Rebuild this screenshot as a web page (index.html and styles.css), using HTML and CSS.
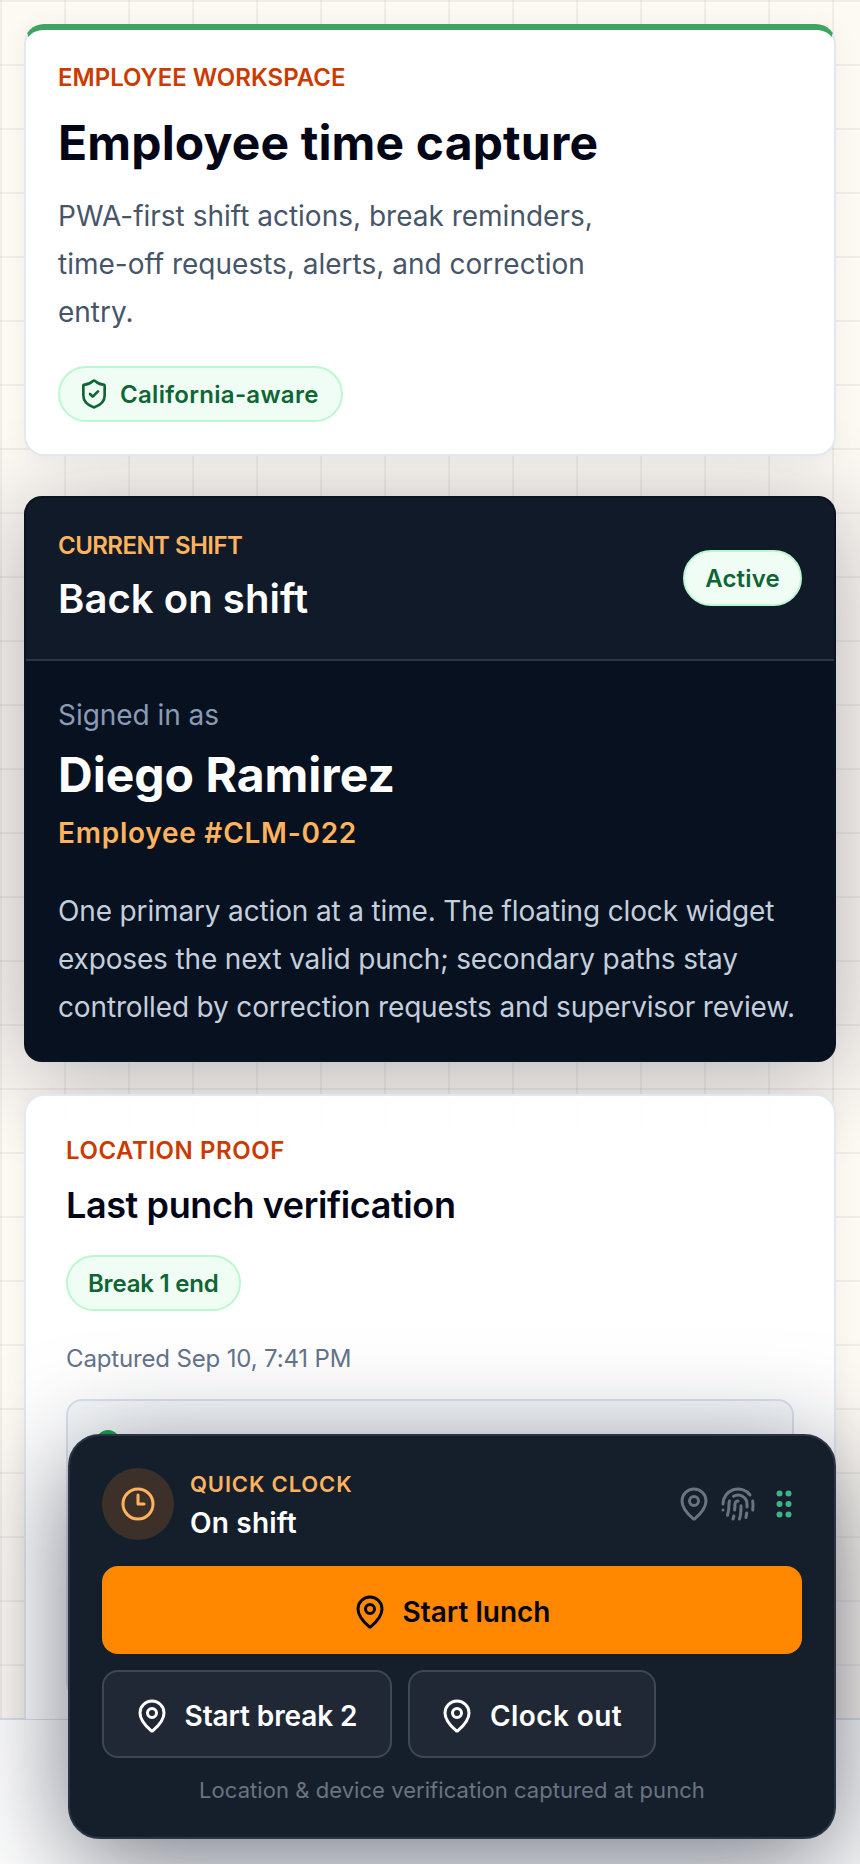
FILE: index.html
```html
<!DOCTYPE html>
<html lang="en">
<head>
<meta charset="utf-8">
<title>Employee time capture</title>
<link rel="stylesheet" href="styles.css">
</head>
<body>
<div class="app">
  <main class="main">
    <section class="card hero">
      <p class="eyebrow">EMPLOYEE WORKSPACE</p>
      <h1 class="hero-title">Employee time capture</h1>
      <p class="hero-desc">PWA-first shift actions, break reminders, time-off requests, alerts, and correction entry.</p>
      <span class="chip chip-icon">
        <svg class="ico-shield" viewBox="0 0 24 24"><path d="M20 13c0 5-3.5 7.5-7.66 8.95a1 1 0 0 1-.67-.01C7.5 20.5 4 18 4 13V6a1 1 0 0 1 1-1c2 0 4.5-1.2 6.24-2.72a1.17 1.17 0 0 1 1.52 0C14.51 3.81 17 5 19 5a1 1 0 0 1 1 1z"/><path d="m9 12 2 2 4-4"/></svg>
        California-aware
      </span>
    </section>

    <section class="shift">
      <header class="shift-head">
        <div>
          <p class="eyebrow eyebrow-amber">CURRENT SHIFT</p>
          <h2 class="shift-title">Back on shift</h2>
        </div>
        <span class="chip chip-active">Active</span>
      </header>
      <div class="shift-body">
        <p class="signed">Signed in as</p>
        <p class="name">Diego Ramirez</p>
        <p class="emp-id">Employee #CLM-022</p>
        <p class="shift-desc">One primary action at a time. The floating clock widget exposes the next valid punch; secondary paths stay controlled by correction requests and supervisor review.</p>
      </div>
    </section>

    <section class="card proof">
      <p class="eyebrow eyebrow-proof">LOCATION PROOF</p>
      <h2 class="proof-title">Last punch verification</h2>
      <span class="chip chip-break">Break 1 end</span>
      <p class="captured">Captured Sep 10, 7:41 PM</p>
      <div class="proof-box"><span class="proof-dot"></span></div>
    </section>
  </main>

  <div class="bottom-bar"></div>

  <aside class="widget">
    <div class="widget-top">
      <span class="clock-badge">
        <svg class="ico" viewBox="0 0 24 24"><circle cx="12" cy="12" r="10"/><path d="M12 6v6h4"/></svg>
      </span>
      <div class="widget-status">
        <p class="quick">QUICK CLOCK</p>
        <p class="on-shift">On shift</p>
      </div>
      <div class="widget-tools">
        <svg class="ico ico-muted" viewBox="0 0 24 24"><path d="M20 10c0 4.993-5.539 10.193-7.399 11.799a1 1 0 0 1-1.202 0C9.539 20.193 4 14.993 4 10a8 8 0 0 1 16 0"/><circle cx="12" cy="10" r="3"/></svg>
        <svg class="ico ico-muted" viewBox="0 0 24 24"><path d="M12 10a2 2 0 0 0-2 2c0 1.02-.1 2.51-.26 4"/><path d="M14 13.12c0 2.38 0 6.38-1 8.88"/><path d="M17.29 21.02c.12-.6.43-2.3.5-3.02"/><path d="M2 12a10 10 0 0 1 18-6"/><path d="M2 16h.01"/><path d="M21.8 16c.2-2 .131-5.354 0-6"/><path d="M5 19.5C5.5 18 6 15 6 12a6 6 0 0 1 .34-2"/><path d="M8.65 22c.21-.66.45-1.32.57-2"/><path d="M9 6.8a6 6 0 0 1 9 5.2v2"/></svg>
        <svg class="ico ico-grip" viewBox="0 0 24 24"><circle cx="9" cy="5" r="1"/><circle cx="15" cy="5" r="1"/><circle cx="9" cy="12" r="1"/><circle cx="15" cy="12" r="1"/><circle cx="9" cy="19" r="1"/><circle cx="15" cy="19" r="1"/></svg>
      </div>
    </div>
    <button class="btn btn-primary" type="button">
      <svg class="ico" viewBox="0 0 24 24"><path d="M20 10c0 4.993-5.539 10.193-7.399 11.799a1 1 0 0 1-1.202 0C9.539 20.193 4 14.993 4 10a8 8 0 0 1 16 0"/><circle cx="12" cy="10" r="3"/></svg>
      Start lunch
    </button>
    <div class="btn-row">
      <button class="btn btn-secondary btn-break" type="button">
        <svg class="ico" viewBox="0 0 24 24"><path d="M20 10c0 4.993-5.539 10.193-7.399 11.799a1 1 0 0 1-1.202 0C9.539 20.193 4 14.993 4 10a8 8 0 0 1 16 0"/><circle cx="12" cy="10" r="3"/></svg>
        Start break 2
      </button>
      <button class="btn btn-secondary btn-clock" type="button">
        <svg class="ico" viewBox="0 0 24 24"><path d="M20 10c0 4.993-5.539 10.193-7.399 11.799a1 1 0 0 1-1.202 0C9.539 20.193 4 14.993 4 10a8 8 0 0 1 16 0"/><circle cx="12" cy="10" r="3"/></svg>
        Clock out
      </button>
    </div>
    <p class="widget-note">Location &amp; device verification captured at punch</p>
  </aside>
</div>
</body>
</html>
```
FILE: styles.css
```css
* { box-sizing: border-box; }
html, body { margin: 0; padding: 0; }
body { font-family: Inter, "Noto Sans", sans-serif; background: #fff; color: #0f172a; }
p, h1, h2 { margin: 0; }

.app { position: relative; width: 860px; height: 1864px; overflow: hidden; display: flex; flex-direction: column; }

.main {
  height: 1719px; flex: none; overflow: hidden; padding: 24px 24px 0;
  background-color: #fdf9f3;
  background-image:
    linear-gradient(rgba(15,23,42,.05) 2px, transparent 2px),
    linear-gradient(90deg, rgba(15,23,42,.05) 2px, transparent 2px);
  background-size: 64px 64px;
}
.bottom-bar { flex: 1; background: #fff; border-top: 2px solid #dbe3ee; margin-top: -1px; position: relative; }

svg { display: block; flex: none; fill: none; stroke: currentColor; stroke-width: 2; stroke-linecap: round; stroke-linejoin: round; }
.ico { width: 36px; height: 36px; }
.ico-shield { width: 32px; height: 32px; }
.ico-muted { color: #6b7280; }
.ico-grip { color: #3fb587; }

.card {
  position: relative; z-index: 1;
  background: rgba(255,255,255,.97);
  border: 2px solid #e2e8f0;
  border-radius: 20px;
  box-shadow: 0 2px 24px rgba(15,23,42,.05);
}

.eyebrow { font-size: 24px; line-height: 30px; font-weight: 600; color: #cc3a00; }
.eyebrow-amber { color: #ffb35c; letter-spacing: -.55px; }
.eyebrow-proof { letter-spacing: .55px; }

.hero { height: 432px; border-top: 6px solid #3da55f; padding: 33px 32px 0; }
.hero-title { margin-top: 20px; font-size: 48px; line-height: 60px; font-weight: 700; color: #020617; letter-spacing: .15px; }
.hero-desc { margin-top: 19px; max-width: 560px; font-size: 28px; line-height: 48px; color: #475569; }

.chip {
  display: inline-flex; align-items: center; height: 56px; border-radius: 28px;
  background: #f0fdf4; border: 2px solid #bbf7d0; color: #0f6534;
  font-size: 24px; font-weight: 600;
}
.chip-icon { margin-top: 30px; padding: 0 22px 0 18px; gap: 10px; letter-spacing: .3px; }
.chip-active { padding: 0 20px; letter-spacing: .2px; }
.chip-break { margin-top: 26px; padding: 0 20px; letter-spacing: -.2px; }

.shift { margin-top: 40px; height: 566px; border-radius: 18px; border: 2px solid #0a1320; background: #071120; color: #fff; box-shadow: 0 12px 96px rgba(15,23,42,.32); overflow: hidden; }
.shift-head { height: 163px; background: #101a29; border-bottom: 2px solid #2a3444; padding: 0 32px 3px; display: flex; align-items: center; justify-content: space-between; }
.shift-head .chip { margin-top: 2px; }
.shift-title { margin-top: 13px; font-size: 40px; line-height: 50px; font-weight: 600; letter-spacing: .06px; }
.shift-body { padding: 34px 32px 0; }
.signed { font-size: 28px; line-height: 40px; color: #8a9bb5; letter-spacing: -.05px; }
.name { margin-top: 10px; font-size: 48px; line-height: 60px; font-weight: 700; }
.emp-id { margin-top: 8px; font-size: 28px; line-height: 40px; font-weight: 600; color: #ffb35c; letter-spacing: .75px; }
.shift-desc { margin-top: 34px; font-size: 28px; line-height: 48px; color: #c3cfdd; letter-spacing: -.15px; }

.proof { margin-top: 32px; height: 800px; padding: 40px 40px 0; }
.proof-title { margin-top: 15px; font-size: 36px; line-height: 48px; font-weight: 600; color: #020617; letter-spacing: -.4px; }
.proof .chip-break { display: flex; width: max-content; }
.captured { margin-top: 32px; font-size: 24px; line-height: 32px; color: #64748b; letter-spacing: -.15px; }
.proof-box { margin-top: 24px; width: 728px; height: 300px; border: 2px solid #dbe3ee; border-radius: 16px; background: #f8fafc; padding: 29px 28px; }
.proof-dot { display: block; width: 24px; height: 24px; border-radius: 50%; background: #16a34a; }

.widget {
  position: absolute; z-index: 2; left: 68px; top: 1434px; width: 768px; height: 405px;
  background: #151f2c; border: 2px solid #2a3444; border-radius: 32px;
  padding: 32px 32px 0;
  box-shadow: 0 24px 110px rgba(15,23,42,.58);
}
.widget-top { display: flex; align-items: center; height: 72px; }
.clock-badge { width: 72px; height: 72px; border-radius: 50%; background: #3c3029; color: #ffb35c; display: flex; align-items: center; justify-content: center; }
.widget-status { margin-left: 16px; flex: 1; padding-top: 2px; }
.quick { font-size: 22px; line-height: 30px; font-weight: 600; color: #ffb35c; letter-spacing: .85px; }
.on-shift { margin-top: 6px; font-size: 28px; line-height: 36px; font-weight: 600; color: #fff; letter-spacing: .2px; }
.widget-tools { display: flex; align-items: center; gap: 8px; }
.widget-tools .ico-grip { margin-left: 2px; }

.btn { display: flex; align-items: center; justify-content: center; gap: 15px; height: 88px; border-radius: 16px; font-family: inherit; font-size: 28px; font-weight: 600; cursor: pointer; }
.btn-primary { width: 100%; margin-top: 26px; padding: 3px 2px 0 0; background: #ff8800; color: #020617; border: 0; }
.btn-row { display: flex; gap: 16px; margin-top: 16px; }
.btn-secondary { padding: 3px 3px 0 0; background: #202836; color: #fff; border: 2px solid #3f4753; }
.btn-break { width: 290px; letter-spacing: -.1px; }
.btn-clock { width: 248px; letter-spacing: .4px; }
.widget-note { margin-top: 16px; text-align: center; font-size: 22px; line-height: 32px; color: #6b7380; letter-spacing: .05px; }
```
